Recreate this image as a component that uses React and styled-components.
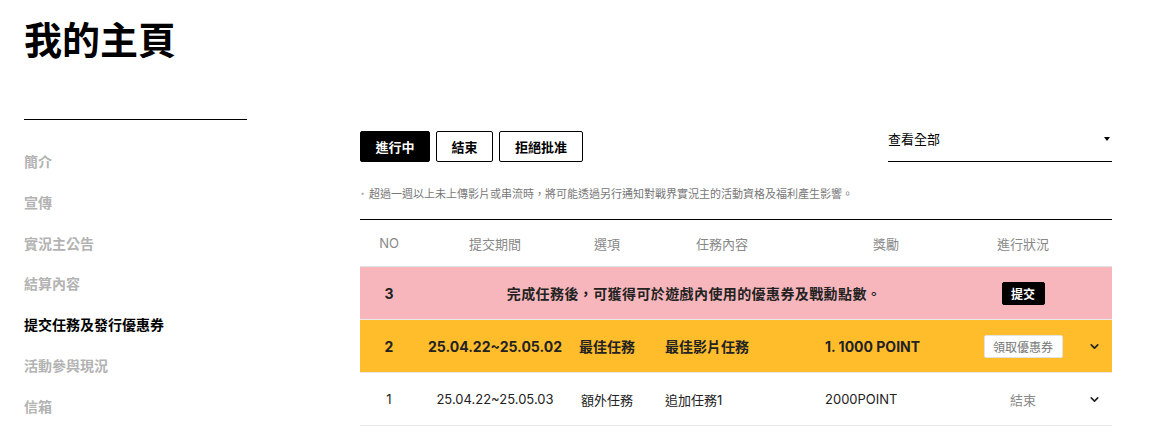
import React from "react";
import styled, { createGlobalStyle } from "styled-components";
import { ChevronDown } from "lucide-react";

const GlobalStyle = createGlobalStyle`
  body {
    margin: 0;
    background: #fff;
    font-family: "Noto Sans CJK TC", "Noto Sans", sans-serif;
    color: #000;
  }
`;

const Page = styled.div`
  width: 1170px;
  padding-left: 24px;
  box-sizing: border-box;
`;

const Header = styled.div`
  height: 119px;
  padding-top: 18px;
  box-sizing: border-box;
  h1 {
    margin: 0;
    font-size: 38px;
    line-height: 40px;
    font-weight: 700;
  }
`;

const Body = styled.div`
  display: flex;
  align-items: flex-start;
`;

const Sidebar = styled.ul`
  list-style: none;
  margin: 0;
  padding: 21px 0 0;
  width: 223px;
  border-top: 1px solid #000;
`;

const NavItem = styled.li`
  height: 40.8px;
  line-height: 40px;
  font-size: 14px;
  font-weight: 700;
  color: ${(p) => (p.$active ? "#000" : "#b3b3b3")};
`;

const Main = styled.div`
  margin-left: 113px;
  width: 752px;
  padding-top: 12px;
`;

const Toolbar = styled.div`
  display: flex;
  justify-content: space-between;
  align-items: flex-start;
`;

const Tabs = styled.div`
  display: flex;
  gap: 6px;
`;

const Tab = styled.button`
  height: 31px;
  width: ${(p) => p.$w}px;
  padding: 0;
  border: 1px solid #000;
  border-radius: 2px;
  background: ${(p) => (p.$active ? "#000" : "#fff")};
  color: ${(p) => (p.$active ? "#fff" : "#000")};
  font-family: inherit;
  font-size: 13px;
  font-weight: 700;
`;

const Select = styled.div`
  width: 224px;
  height: 30px;
  border-bottom: 1px solid #000;
  display: flex;
  justify-content: space-between;
  align-items: flex-start;
  font-size: 13px;
  line-height: 16px;
  span {
    display: block;
  }
`;

const Caret = styled.span`
  width: 0;
  height: 0;
  margin: 6px 2px 0 0;
  border-left: 3px solid transparent;
  border-right: 3px solid transparent;
  border-top: 4px solid #000;
`;

const Note = styled.p`
  margin: 23px 0 0;
  font-size: 11px;
  line-height: 16px;
  color: #777;
  &::before {
    content: "·";
    margin: 0 1px 0 -3px;
    color: #aaa;
  }
`;

const Table = styled.div`
  margin-top: 18px;
  border-top: 1px solid #000;
`;

const Row = styled.div`
  display: grid;
  grid-template-columns: 58px 154px 70px 160px 168px 106px 36px;
  align-items: center;
  height: ${(p) => (p.$head ? 46 : 52)}px;
  border-bottom: 1px solid ${(p) => (p.$head ? "#dfe3e6" : "#e8e8e8")};
  background: ${(p) => p.$bg || "#fff"};
  font-family: "Inter", "Noto Sans CJK TC", sans-serif;
  font-size: ${(p) => (p.$bold ? 14 : 13)}px;
  font-weight: ${(p) => (p.$bold ? 700 : 400)};
  color: ${(p) => (p.$head ? "#888" : "#222")};
`;

const Cell = styled.div`
  text-align: ${(p) => (p.$left ? "left" : "center")};
  padding-left: ${(p) => (p.$left ? 23 : 0)}px;
  grid-column: ${(p) => p.$span || "auto"};
  letter-spacing: ${(p) => p.$ls || 0}px;
  color: ${(p) => p.$color || "inherit"};
  display: flex;
  justify-content: ${(p) => (p.$left ? "flex-start" : "center")};
  align-items: center;
`;

const SmallButton = styled.button`
  height: 23px;
  width: ${(p) => p.$w}px;
  padding: 0;
  border-radius: 2px;
  border: 1px solid ${(p) => (p.$dark ? "#000" : "#e2e2e2")};
  background: ${(p) => (p.$dark ? "#000" : "#fff")};
  color: ${(p) => (p.$dark ? "#fff" : "#777")};
  font-family: "Noto Sans CJK TC", sans-serif;
  font-size: 12px;
  font-weight: ${(p) => (p.$dark ? 700 : 400)};
`;

const navItems = [
  "簡介",
  "宣傳",
  "實況主公告",
  "結算內容",
  "提交任務及發行優惠券",
  "活動參與現況",
  "信箱",
];

export default function App() {
  return (
    <Page>
      <GlobalStyle />
      <Header>
        <h1>我的主頁</h1>
      </Header>
      <Body>
        <Sidebar>
          {navItems.map((n, i) => (
            <NavItem key={n} $active={i === 4}>
              {n}
            </NavItem>
          ))}
        </Sidebar>
        <Main>
          <Toolbar>
            <Tabs>
              <Tab $active $w={70}>進行中</Tab>
              <Tab $w={57}>結束</Tab>
              <Tab $w={84}>拒絕批准</Tab>
            </Tabs>
            <Select>
              <span>查看全部</span>
              <Caret />
            </Select>
          </Toolbar>
          <Note>
            超過一週以上未上傳影片或串流時，將可能透過另行通知對戰界實況主的活動資格及福利產生影響。
          </Note>
          <Table>
            <Row $head>
              <Cell>NO</Cell>
              <Cell>提交期間</Cell>
              <Cell>選項</Cell>
              <Cell>任務內容</Cell>
              <Cell>獎勵</Cell>
              <Cell>進行狀況</Cell>
              <Cell />
            </Row>
            <Row $bg="#f7b6bc" $bold>
              <Cell>3</Cell>
              <Cell $span="2 / 6" $ls={0.4}>
                完成任務後，可獲得可於遊戲內使用的優惠券及戰勳點數。
              </Cell>
              <Cell>
                <SmallButton $dark $w={43}>提交</SmallButton>
              </Cell>
              <Cell />
            </Row>
            <Row $bg="#ffbd2b" $bold>
              <Cell>2</Cell>
              <Cell>25.04.22~25.05.02</Cell>
              <Cell>最佳任務</Cell>
              <Cell $left>最佳影片任務</Cell>
              <Cell $left>1. 1000 POINT</Cell>
              <Cell>
                <SmallButton $w={79}>領取優惠券</SmallButton>
              </Cell>
              <Cell>
                <ChevronDown size={13} strokeWidth={3} />
              </Cell>
            </Row>
            <Row>
              <Cell>1</Cell>
              <Cell>25.04.22~25.05.03</Cell>
              <Cell>額外任務</Cell>
              <Cell $left>追加任務1</Cell>
              <Cell $left>2000POINT</Cell>
              <Cell $color="#888">結束</Cell>
              <Cell>
                <ChevronDown size={13} strokeWidth={3} />
              </Cell>
            </Row>
          </Table>
        </Main>
      </Body>
    </Page>
  );
}
